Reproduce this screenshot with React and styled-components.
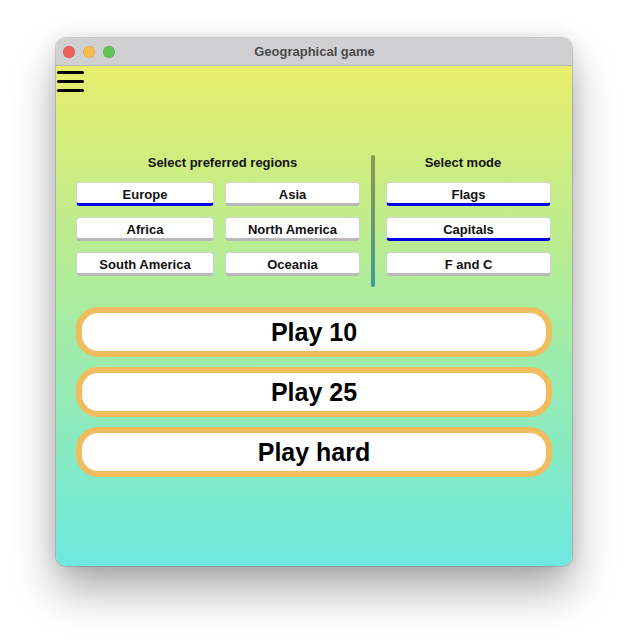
import React, { useState } from "react";
import styled, { createGlobalStyle } from "styled-components";

const Global = createGlobalStyle`
  html, body { margin: 0; padding: 0; background: #ffffff; }
  body { font-family: "Liberation Sans", Arial, sans-serif; }
`;

const Page = styled.div`
  width: 627px;
  height: 640px;
  padding: 38px 0 0 56px;
  box-sizing: border-box;
`;

const Window = styled.div`
  width: 516px;
  height: 528px;
  border-radius: 10px;
  overflow: hidden;
  display: flex;
  flex-direction: column;
  box-shadow: 0 0 0 1px rgba(0, 0, 0, 0.14), 0 24px 44px rgba(0, 0, 0, 0.33),
    0 0 18px rgba(0, 0, 0, 0.1);
`;

const TitleBar = styled.div`
  position: relative;
  height: 27px;
  flex: none;
  background: #d0d0d2;
  border-bottom: 1px solid #b9b9bb;
  display: flex;
  align-items: center;
  justify-content: center;
`;

const Lights = styled.div`
  position: absolute;
  left: 7px;
  top: 8px;
  display: flex;
  gap: 8px;
`;

const Light = styled.span`
  width: 12px;
  height: 12px;
  border-radius: 50%;
  background: ${(p) => p.$c};
  box-shadow: inset 0 0 0 0.5px rgba(0, 0, 0, 0.15);
`;

const Title = styled.div`
  font-family: "Liberation Sans", Arial, sans-serif;
  font-weight: bold;
  font-size: 13px;
  color: #4b4b4b;
  margin-left: 1px;
`;

const Content = styled.div`
  flex: 1;
  background: linear-gradient(180deg, #e8ee6c 0%, #a9ec9f 48%, #6ce9df 100%);
  display: flex;
  flex-direction: column;
`;

const Burger = styled.button`
  all: unset;
  margin: 5px 0 0 1px;
  width: 27px;
  display: flex;
  flex-direction: column;
  gap: 6px;
  cursor: pointer;
`;

const BurgerLine = styled.span`
  display: block;
  height: 3px;
  border-radius: 2px;
  background: #000;
`;

const Options = styled.div`
  margin: 63px 20px 0 20px;
  display: flex;
`;

const Column = styled.div`
  width: ${(p) => p.$w}px;
  box-sizing: border-box;
  padding: 0 ${(p) => p.$pr}px 11px ${(p) => p.$pl}px;
  display: flex;
  flex-direction: column;
`;

const Heading = styled.div`
  font-weight: bold;
  font-size: 13px;
  line-height: 16px;
  color: #111;
  text-align: center;
  margin: 0 0 11px ${(p) => p.$shift || 0}px;
`;

const Divider = styled.div`
  width: 4px;
  flex: none;
  border-radius: 2px;
  background: linear-gradient(180deg, #8d9a4d 0%, #6f9a6a 50%, #3e9c9b 100%);
`;

const ButtonGrid = styled.div`
  display: grid;
  grid-template-columns: ${(p) => p.$cols};
  column-gap: 11px;
  row-gap: 11px;
`;

const Choice = styled.button`
  all: unset;
  box-sizing: border-box;
  height: 24px;
  background: #fff;
  border: 1px solid #d2d2d2;
  border-bottom: 3px solid ${(p) => (p.$on ? "#0000ee" : "#b9b9b9")};
  border-radius: 4px;
  font-family: "Liberation Sans", Arial, sans-serif;
  font-weight: bold;
  font-size: 13px;
  color: #111;
  text-align: center;
  line-height: 23px;
  cursor: pointer;
`;

const PlayList = styled.div`
  margin: 20px 20px 0 20px;
  display: flex;
  flex-direction: column;
  gap: 10px;
`;

const PlayButton = styled.button`
  all: unset;
  box-sizing: border-box;
  height: 50px;
  background: #fff;
  border: 6px solid #f0bc5e;
  border-radius: 22px;
  font-family: "Liberation Sans", Arial, sans-serif;
  font-weight: bold;
  font-size: 25px;
  color: #000;
  text-align: center;
  line-height: 37px;
  cursor: pointer;
`;

const regions = ["Europe", "Asia", "Africa", "North America", "South America", "Oceania"];
const modes = ["Flags", "Capitals", "F and C"];

export default function App() {
  const [sel, setSel] = useState({ Europe: true });
  const [modeSel, setModeSel] = useState({ Flags: true, Capitals: true });
  return (
    <Page>
      <Global />
      <Window>
        <TitleBar>
          <Lights>
            <Light $c="#ee5f57" />
            <Light $c="#f5bd4f" />
            <Light $c="#5fc454" />
          </Lights>
          <Title>Geographical game</Title>
        </TitleBar>
        <Content>
          <Burger aria-label="menu">
            <BurgerLine />
            <BurgerLine />
            <BurgerLine />
          </Burger>
          <Options>
            <Column $w={295} $pl={0} $pr={11}>
              <Heading $shift={9}>Select preferred regions</Heading>
              <ButtonGrid $cols="138px 135px">
                {regions.map((r) => (
                  <Choice
                    key={r}
                    $on={!!sel[r]}
                    onClick={() => setSel({ ...sel, [r]: !sel[r] })}
                  >
                    {r}
                  </Choice>
                ))}
              </ButtonGrid>
            </Column>
            <Divider />
            <Column $w={176} $pl={11} $pr={0}>
              <Heading $shift={-11}>Select mode</Heading>
              <ButtonGrid $cols="1fr">
                {modes.map((m) => (
                  <Choice
                    key={m}
                    $on={!!modeSel[m]}
                    onClick={() => setModeSel({ ...modeSel, [m]: !modeSel[m] })}
                  >
                    {m}
                  </Choice>
                ))}
              </ButtonGrid>
            </Column>
          </Options>
          <PlayList>
            <PlayButton>Play 10</PlayButton>
            <PlayButton>Play 25</PlayButton>
            <PlayButton>Play hard</PlayButton>
          </PlayList>
        </Content>
      </Window>
    </Page>
  );
}
